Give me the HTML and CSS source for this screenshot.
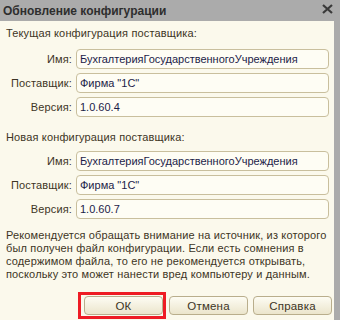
FILE: index.html
```html
<!DOCTYPE html>
<html lang="ru">
<head>
    <meta charset="UTF-8">
    <title>Обновление конфигурации</title>
    <link rel="stylesheet" href="styles.css">
</head>
<body>
    <div class="window">
        <div class="titlebar">
            <span class="title">Обновление конфигурации</span>
            <svg class="close" width="11" height="10" viewBox="0 0 11 10">
                <path d="M1 1 L10 9 M10 1 L1 9" stroke="#3a3a3a" stroke-width="2.2" fill="none"/>
            </svg>
        </div>

        <div class="content">
            <div class="group-title">Текущая конфигурация поставщика:</div>
            <div class="form">
                <span class="label">Имя:</span>
                <div class="field">БухгалтерияГосударственногоУчреждения</div>
                <span class="label">Поставщик:</span>
                <div class="field">Фирма "1С"</div>
                <span class="label">Версия:</span>
                <div class="field">1.0.60.4</div>
            </div>

            <div class="group-title second">Новая конфигурация поставщика:</div>
            <div class="form">
                <span class="label">Имя:</span>
                <div class="field">БухгалтерияГосударственногоУчреждения</div>
                <span class="label">Поставщик:</span>
                <div class="field">Фирма "1С"</div>
                <span class="label">Версия:</span>
                <div class="field">1.0.60.7</div>
            </div>

            <p class="note">Рекомендуется обращать внимание на источник, из которого был получен файл конфигурации. Если есть сомнения в содержимом файла, то его не рекомендуется открывать, поскольку это может нанести вред компьютеру и данным.</p>

            <div class="buttons">
                <span class="highlight"><button>ОК</button></span>
                <button>Отмена</button>
                <button>Справка</button>
            </div>
        </div>
    </div>
</body>
</html>
```

FILE: styles.css
```css
body {
    margin: 0;
    font-family: "Liberation Sans", Arial, sans-serif;
    background-color: #fbf9ec;
}

.window {
    width: 334px;
    height: 320px;
    border-right: 6px solid #ababab;
    background-color: #fbf9ec;
    overflow: hidden;
}

.titlebar {
    height: 21px;
    background-color: #ababab;
    display: flex;
    align-items: center;
    justify-content: space-between;
    padding: 0 1px 0 3px;
}

.title {
    font-size: 12px;
    font-weight: bold;
    color: #2e2e2e;
}

.close {
    margin-top: -3px;
}

.content {
    padding: 5px 2px 0 6px;
    color: #3d3525;
    font-size: 11px;
    letter-spacing: 0.15px;
}

.group-title {
    line-height: 14px;
    margin-bottom: 9px;
}

.group-title.second {
    margin-top: 13px;
    margin-bottom: 7px;
}

/* Label / field grid */
.form {
    display: grid;
    grid-template-columns: 66px 253px;
    column-gap: 4px;
    row-gap: 4px;
    align-items: center;
}

.label {
    text-align: right;
}

.field {
    height: 18px;
    line-height: 18px;
    padding: 0 3px;
    border: 1px solid #c9bf9d;
    border-radius: 4px;
    background-color: #fefdf4;
    color: #1c1c48;
    font-size: 11px;
    letter-spacing: 0;
    white-space: nowrap;
    overflow: hidden;
}

.note {
    margin: 10px 0 0 0;
    line-height: 13px;
}

/* Buttons */
.buttons {
    display: flex;
    justify-content: flex-end;
    align-items: center;
    gap: 5px;
    margin-top: 11px;
}

.highlight {
    display: inline-flex;
    padding: 1px 0 1px 3px;
    border: 3px solid #ee1c24;
    margin-right: -2px;
}

button {
    width: 79px;
    height: 19px;
    padding: 0;
    font-family: "Liberation Sans", Arial, sans-serif;
    font-size: 11.5px;
    letter-spacing: 0.2px;
    color: #3d3525;
    border: 1px solid #b9ae8c;
    border-radius: 4px;
    background: linear-gradient(#fdfcf3, #ebe5cc);
}
```
